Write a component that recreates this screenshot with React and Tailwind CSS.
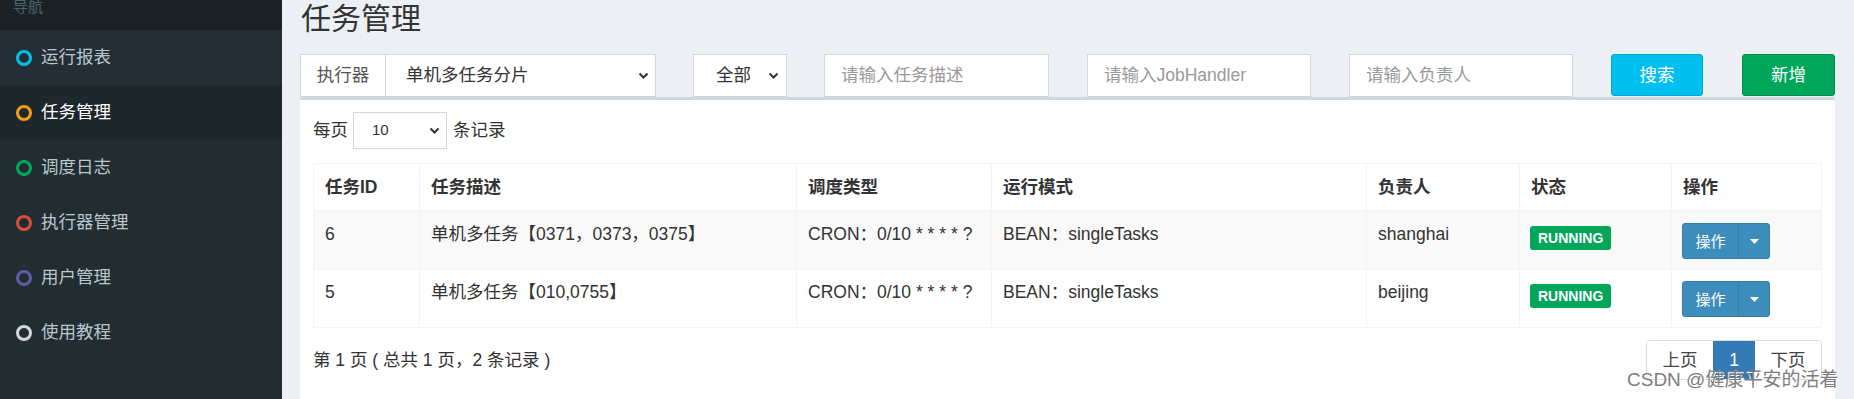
import React from 'react';

const font = { fontFamily: '"Liberation Sans", "Noto Sans CJK SC", sans-serif' };

const navItems = [
    { label: '运行报表', color: 'border-[#00c0ef]', bg: 'bg-[#242f35]' },
    { label: '任务管理', color: 'border-[#f39c12]', bg: 'bg-[#1e282c]', active: true },
    { label: '调度日志', color: 'border-[#00a65a]' },
    { label: '执行器管理', color: 'border-[#dd4b39]' },
    { label: '用户管理', color: 'border-[#605ca8]' },
    { label: '使用教程', color: 'border-[#d2d6de]' },
];

const jobs = [
    { id: 6, desc: '单机多任务【0371，0373，0375】', owner: 'shanghai' },
    { id: 5, desc: '单机多任务【010,0755】', owner: 'beijing' },
];

const Chevron = () => (
    <svg width="11" height="7" viewBox="0 0 11 7" className="shrink-0">
        <path d="M1.5 1.5l4 4 4-4" fill="none" stroke="#333" strokeWidth="2" />
    </svg>
);

const SelectBox = ({ value, className }) => (
    <div className={`flex items-center justify-between bg-white border border-[#d2d6de] ${className}`}>
        <span>{value}</span>
        <Chevron />
    </div>
);

const App = () => {
    return (
        <div className="relative flex h-[399px] w-[1854px] overflow-hidden text-[17.5px] text-[#333]" style={font}>
            {/* Sidebar */}
            <div className="w-[282px] shrink-0 bg-[#222d32]">
                <div className="h-[30px] overflow-hidden bg-[#1a2226] pl-[13px]">
                    <div className="-mt-[1px] text-[15px] leading-[15px] text-[#4b646f]">导航</div>
                </div>
                {navItems.map(item => (
                    <div key={item.label} className={`flex h-[55px] items-center pl-[16px] ${item.bg || ''}`}>
                        <span className={`h-[16px] w-[16px] rounded-full border-[3px] ${item.color}`} />
                        <span className={`ml-[9px] ${item.active ? 'text-white' : 'text-[#b8c7ce]'}`}>{item.label}</span>
                    </div>
                ))}
            </div>

            {/* Main */}
            <div className="flex-1 bg-[#ecf0f5] pl-[18px] pr-[19px]">
                <h1 className="h-[54px] pl-[1px] text-[30px] leading-[38px] text-[#333]">任务管理</h1>

                {/* Filters */}
                <div className="flex h-[43px]">
                    <div className="flex w-[356px]">
                        <div className="flex w-[86px] items-center justify-center border border-[#d2d6de] bg-white text-[#555]">执行器</div>
                        <SelectBox value="单机多任务分片" className="w-[270px] border-l-0 pl-[20px] pr-[6px]" />
                    </div>
                    <SelectBox value="全部" className="ml-[37px] w-[94px] pl-[22px] pr-[7px]" />
                    <input readOnly placeholder="请输入任务描述" className="ml-[37px] w-[225px] border border-[#d2d6de] bg-white px-[16px] outline-none placeholder:text-[#999]" />
                    <input readOnly placeholder="请输入JobHandler" className="ml-[38px] w-[224px] border border-[#d2d6de] bg-white px-[16px] outline-none placeholder:text-[#999]" />
                    <input readOnly placeholder="请输入负责人" className="ml-[38px] w-[224px] border border-[#d2d6de] bg-white px-[16px] outline-none placeholder:text-[#999]" />
                    <button className="ml-[38px] h-[42px] w-[92px] rounded-[3px] border border-[#00acd6] bg-[#00c0ef] text-white">搜索</button>
                    <button className="ml-[39px] h-[42px] w-[93px] rounded-[3px] border border-[#008d4c] bg-[#00a65a] text-white">新增</button>
                </div>

                {/* Box */}
                <div className="h-[302px] rounded-t-[3px] border-t-[3px] border-[#d2d6de] bg-white px-[13px] pt-[12px]">
                    <div className="flex h-[37px] items-center">
                        <span>每页</span>
                        <SelectBox value="10" className="ml-[5px] h-[37px] w-[94px] pl-[18px] pr-[6px] text-[15px]" />
                        <span className="ml-[6px]">条记录</span>
                    </div>

                    <table className="mt-[14px] w-full table-fixed border-collapse border border-[#f4f4f4]">
                        <colgroup>
                            <col className="w-[106px]" />
                            <col className="w-[377px]" />
                            <col className="w-[195px]" />
                            <col className="w-[375px]" />
                            <col className="w-[153px]" />
                            <col className="w-[152px]" />
                            <col />
                        </colgroup>
                        <thead>
                            <tr>
                                {['任务ID', '任务描述', '调度类型', '运行模式', '负责人', '状态', '操作'].map(h => (
                                    <th key={h} className="border border-b-2 border-[#f4f4f4] px-[11px] py-[10px] text-left font-bold leading-[26px]">{h}</th>
                                ))}
                            </tr>
                        </thead>
                        <tbody>
                            {jobs.map((job, i) => (
                                <tr key={job.id} className={i === 0 ? 'bg-[#f9f9f9]' : 'bg-white'}>
                                    <td className="border border-[#f4f4f4] px-[11px] py-[10px] align-top leading-[25px]">{job.id}</td>
                                    <td className="border border-[#f4f4f4] px-[11px] py-[10px] align-top leading-[25px]">{job.desc}</td>
                                    <td className="border border-[#f4f4f4] px-[11px] py-[10px] align-top leading-[25px]">CRON：0/10 * * * * ?</td>
                                    <td className="border border-[#f4f4f4] px-[11px] py-[10px] align-top leading-[25px]">BEAN：singleTasks</td>
                                    <td className="border border-[#f4f4f4] px-[11px] py-[10px] align-top leading-[25px]">{job.owner}</td>
                                    <td className="border border-[#f4f4f4] px-[10px] py-[10px] align-top leading-[25px]">
                                        <span className="mt-[4px] inline-block h-[24px] rounded-[3px] bg-[#00a65a] px-[8px] align-top text-[14px] font-bold leading-[24px] text-white">RUNNING</span>
                                    </td>
                                    <td className="border border-[#f4f4f4] px-[10px] py-[10px] align-top leading-[25px]">
                                        <div className="mt-[1px] flex h-[36px] w-[88px] overflow-hidden rounded-[3px] border border-[#367fa9] bg-[#3c8dbc] text-white">
                                            <span className="flex w-[55px] items-center justify-center text-[15px]">操作</span>
                                            <span className="flex flex-1 items-center justify-center border-l border-[#367fa9]">
                                                <svg width="9" height="5" viewBox="0 0 9 5"><path d="M0 0h9L4.5 5z" fill="#fff" /></svg>
                                            </span>
                                        </div>
                                    </td>
                                </tr>
                            ))}
                        </tbody>
                    </table>

                    <div className="mt-[12px] flex h-[40px] items-center justify-between">
                        <span>第 1 页 ( 总共 1 页，2 条记录 )</span>
                        <div className="flex h-[40px] overflow-hidden rounded-[4px] border border-[#ddd] text-[#444]">
                            <span className="flex w-[66px] items-center justify-center bg-white">上页</span>
                            <span className="flex w-[42px] items-center justify-center bg-[#337ab7] text-white">1</span>
                            <span className="flex w-[66px] items-center justify-center bg-white">下页</span>
                        </div>
                    </div>
                </div>
            </div>

            {/* watermark */}
            <div className="pointer-events-none absolute left-[1627px] top-[367px] text-[19px] leading-[26px] text-[#7d7d7d] [text-shadow:1px_1px_0_#fff]">
                CSDN @健康平安的活着
            </div>
        </div>
    );
};

export default App;
